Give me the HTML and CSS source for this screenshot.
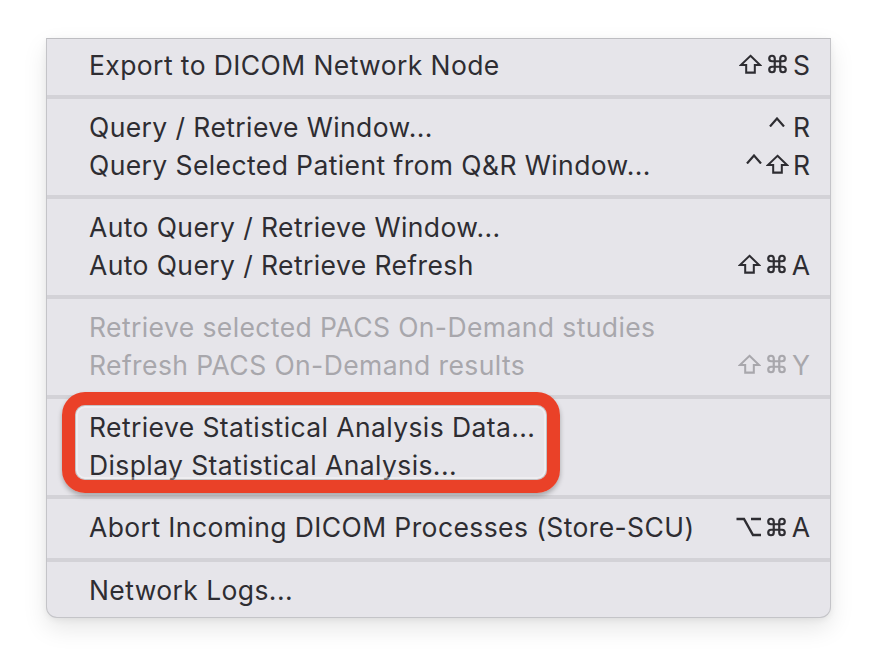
FILE: index.html
```html
<!DOCTYPE html>
<html>
<head>
<meta charset="utf-8">
<link rel="stylesheet" href="styles.css">
</head>
<body>
<div class="menu">
  <div class="row"><span class="label">Export to DICOM Network Node</span><span class="key"><svg class="g shift" viewBox="0 0 24 20"><path d="M12 1.5 L22 11 H16.5 V19 H7.5 V11 H2 Z"/></svg><svg class="g cmd" viewBox="0 0 24 24"><path d="M15 6v12a3 3 0 1 0 3-3H6a3 3 0 1 0 3 3V6a3 3 0 1 0-3 3h12a3 3 0 1 0-3-3"/></svg><span class="k">S</span></span></div>
  <div class="sep"></div>
  <div class="row"><span class="label">Query / Retrieve Window...</span><span class="key"><svg class="g caret" viewBox="0 0 16 10"><path d="M1 9.5 L8 1.5 L15 9.5"/></svg><span class="k kgap">R</span></span></div>
  <div class="row"><span class="label">Query Selected Patient from Q&amp;R Window...</span><span class="key"><svg class="g caret" viewBox="0 0 16 10"><path d="M1 9.5 L8 1.5 L15 9.5"/></svg><svg class="g shift" viewBox="0 0 24 20"><path d="M12 1.5 L22 11 H16.5 V19 H7.5 V11 H2 Z"/></svg><span class="k">R</span></span></div>
  <div class="sep"></div>
  <div class="row"><span class="label">Auto Query / Retrieve Window...</span></div>
  <div class="row"><span class="label">Auto Query / Retrieve Refresh</span><span class="key"><svg class="g shift" viewBox="0 0 24 20"><path d="M12 1.5 L22 11 H16.5 V19 H7.5 V11 H2 Z"/></svg><svg class="g cmd" viewBox="0 0 24 24"><path d="M15 6v12a3 3 0 1 0 3-3H6a3 3 0 1 0 3 3V6a3 3 0 1 0-3 3h12a3 3 0 1 0-3-3"/></svg><span class="k">A</span></span></div>
  <div class="sep"></div>
  <div class="row disabled"><span class="label">Retrieve selected PACS On-Demand studies</span></div>
  <div class="row disabled"><span class="label">Refresh PACS On-Demand results</span><span class="key"><svg class="g shift" viewBox="0 0 24 20"><path d="M12 1.5 L22 11 H16.5 V19 H7.5 V11 H2 Z"/></svg><svg class="g cmd" viewBox="0 0 24 24"><path d="M15 6v12a3 3 0 1 0 3-3H6a3 3 0 1 0 3 3V6a3 3 0 1 0-3 3h12a3 3 0 1 0-3-3"/></svg><span class="k">Y</span></span></div>
  <div class="sep"></div>
  <div class="row"><span class="label">Retrieve Statistical Analysis Data...</span></div>
  <div class="row"><span class="label">Display Statistical Analysis...</span></div>
  <div class="sep"></div>
  <div class="row"><span class="label">Abort Incoming DICOM Processes (Store-SCU)</span><span class="key"><svg class="g opt" viewBox="0 0 25 20"><path d="M0.5 2 H8 L17 18 H25 M15 2 H25"/></svg><svg class="g cmd" viewBox="0 0 24 24"><path d="M15 6v12a3 3 0 1 0 3-3H6a3 3 0 1 0 3 3V6a3 3 0 1 0-3 3h12a3 3 0 1 0-3-3"/></svg><span class="k">A</span></span></div>
  <div class="sep"></div>
  <div class="row"><span class="label">Network Logs...</span></div>
  <div class="highlight"></div>
</div>
</body>
</html>
```

FILE: styles.css
```css
html, body {
  margin: 0;
  padding: 0;
  background: #ffffff;
}
body {
  width: 876px;
  height: 670px;
  overflow: hidden;
}
.menu {
  position: relative;
  box-sizing: border-box;
  margin: 38px 0 0 46px;
  width: 785px;
  padding: 8px 0 7px 0;
  background: #e6e5ea;
  border: 1px solid #c4c4c8;
  border-top-color: #bdbdc1;
  border-radius: 0 0 11px 11px;
  box-shadow: 0 10px 24px rgba(0,0,0,0.10), 0 2px 6px rgba(0,0,0,0.06);
  font-family: Inter, "Noto Sans", "DejaVu Sans", sans-serif;
  font-size: 26.5px;
  letter-spacing: 0.4px;
  color: #2e2d32;
}
.row {
  display: flex;
  justify-content: space-between;
  align-items: center;
  height: 37.5px;
  padding: 0 20px 0 42px;
}
.label {
  white-space: nowrap;
  margin-top: -2px;
}
.key {
  display: flex;
  align-items: center;
  gap: 4px;
  margin-top: -2px;
}
.k {
  letter-spacing: 0;
  line-height: 1;
}
.kgap {
  margin-left: 4px;
}
.g {
  display: block;
  fill: none;
  stroke: currentColor;
  stroke-linejoin: miter;
}
.shift {
  width: 23px;
  height: 20px;
  stroke-width: 2.1;
  margin-top: -1px;
}
.cmd {
  width: 23px;
  height: 22px;
  stroke-width: 2.4;
  margin-top: -1px;
}
.caret {
  width: 16px;
  height: 10px;
  stroke-width: 2.2;
  margin-top: -11px;
}
.opt {
  width: 25px;
  height: 20px;
  stroke-width: 2.4;
  margin-top: -1px;
}
.disabled {
  color: #a8a7ac;
}
.sep {
  height: 25px;
  display: flex;
  align-items: center;
}
.sep::before {
  content: "";
  display: block;
  width: 100%;
  height: 4px;
  background: #d3d2d7;
}
.highlight {
  position: absolute;
  left: 15px;
  top: 353px;
  width: 498px;
  height: 101px;
  box-sizing: border-box;
  border: 13px solid #ea4128;
  border-radius: 23px;
  box-shadow: inset 0 0 0 1px rgba(0,0,0,0.18), inset 0 0 0 3px rgba(255,255,255,0.35), 0 3px 5px rgba(0,0,0,0.28);
}
```
